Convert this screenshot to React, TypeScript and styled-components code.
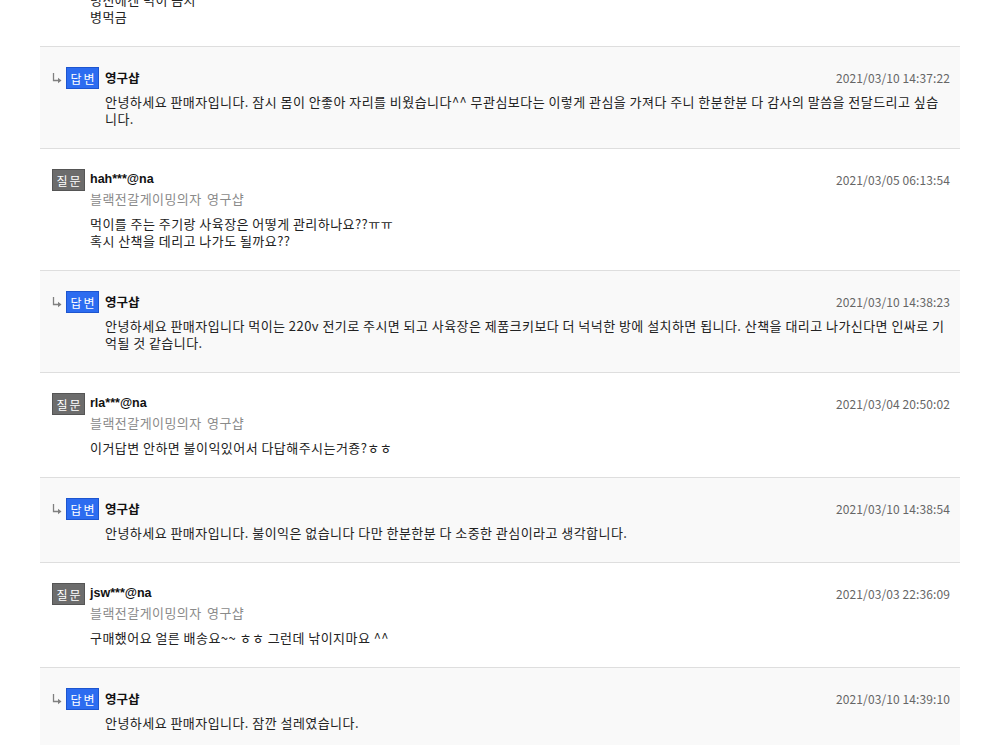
import React from "react";
import styled, { createGlobalStyle } from "styled-components";

const Global = createGlobalStyle`
  html, body { margin: 0; padding: 0; background: #fff; overflow: hidden; }
  body { font-family: "Noto Sans CJK KR", "Noto Sans", sans-serif; font-size: 13px; color: #222; }
`;

const List = styled.ul`
  list-style: none;
  margin: -75px 0 0 40px;
  padding: 0;
  width: 920px;
`;

const Row = styled.li<{ $answer?: boolean }>`
  display: flex;
  padding: 21px 10px 21px 12px;
  border-bottom: 1px solid #dedede;
  background: ${(p) => (p.$answer ? "#f9f9f9" : "#fff")};
`;

const Marker = styled.div<{ $answer?: boolean }>`
  display: flex;
  align-items: flex-start;
  flex: none;
  width: ${(p) => (p.$answer ? "53px" : "38px")};
`;

const ArrowIcon = styled.svg`
  flex: none;
  width: 10px;
  height: 11px;
  margin: 5px 4px 0 0;
  color: #808080;
`;

const Badge = styled.span<{ $answer?: boolean }>`
  display: inline-flex;
  align-items: center;
  justify-content: center;
  box-sizing: border-box;
  width: 33px;
  height: 22px;
  margin-top: -1px;
  font-size: 12px;
  letter-spacing: 2px;
  padding-left: 2px;
  color: #fff;
  background: ${(p) => (p.$answer ? "#2c6cf0" : "#6c6c6c")};
  border: 1px solid ${(p) => (p.$answer ? "#1d55cf" : "#555")};
`;

const Body = styled.div`
  flex: 1;
  min-width: 0;
`;

const Header = styled.div`
  display: flex;
  justify-content: space-between;
  align-items: center;
  height: 18px;
`;

const Name = styled.strong`
  font-family: "Liberation Sans", "Noto Sans CJK KR", sans-serif;
  font-size: 12.5px;
  font-weight: 700;
  color: #111;
`;

const Date = styled.span`
  color: #666;
  font-size: 12px;
  letter-spacing: 0.1px;
`;

const Sub = styled.div`
  margin-top: 2px;
  line-height: 18px;
  color: #8a8a8a;
  letter-spacing: 0.45px;
  word-spacing: 2px;
`;

const Content = styled.div`
  margin-top: 7px;
  line-height: 17px;
  color: #222;
  letter-spacing: 0.45px;
  word-break: break-all;
`;

type Item = {
  answer?: boolean;
  name: string;
  date: string;
  lines: string[];
};

const items: Item[] = [
  {
    name: "kim***@na",
    date: "2021/03/06 10:21:10",
    lines: ["병신에겐 먹이 금지", "병먹금"],
  },
  {
    answer: true,
    name: "영구샵",
    date: "2021/03/10 14:37:22",
    lines: [
      "안녕하세요 판매자입니다. 잠시 몸이 안좋아 자리를 비웠습니다^^ 무관심보다는 이렇게 관심을 가져다 주니 한분한분 다 감사의 말씀을 전달드리고 싶습니다.",
    ],
  },
  {
    name: "hah***@na",
    date: "2021/03/05 06:13:54",
    lines: ["먹이를 주는 주기랑 사육장은 어떻게 관리하나요??ㅠㅠ", "혹시 산책을 데리고 나가도 될까요??"],
  },
  {
    answer: true,
    name: "영구샵",
    date: "2021/03/10 14:38:23",
    lines: [
      "안녕하세요 판매자입니다 먹이는 220v 전기로 주시면 되고 사육장은 제품크키보다 더 넉넉한 방에 설치하면 됩니다. 산책을 대리고 나가신다면 인싸로 기억될 것 같습니다.",
    ],
  },
  {
    name: "rla***@na",
    date: "2021/03/04 20:50:02",
    lines: ["이거답변 안하면 불이익있어서 다답해주시는거죵?ㅎㅎ"],
  },
  {
    answer: true,
    name: "영구샵",
    date: "2021/03/10 14:38:54",
    lines: ["안녕하세요 판매자입니다. 불이익은 없습니다 다만 한분한분 다 소중한 관심이라고 생각합니다."],
  },
  {
    name: "jsw***@na",
    date: "2021/03/03 22:36:09",
    lines: ["구매했어요 얼른 배송요~~ ㅎㅎ 그런데 낚이지마요 ^^"],
  },
  {
    answer: true,
    name: "영구샵",
    date: "2021/03/10 14:39:10",
    lines: ["안녕하세요 판매자입니다. 잠깐 설레였습니다."],
  },
];

const Arrow = () => (
  <ArrowIcon viewBox="0 0 10 11" aria-hidden="true">
    <path d="M1.5 0 V7.5 H8" fill="none" stroke="currentColor" strokeWidth="1.3" />
    <path d="M6 4.8 L9.5 7.5 L6 10.2 Z" fill="currentColor" />
  </ArrowIcon>
);

export default function App() {
  return (
    <>
      <Global />
      <List>
        {items.map((it, i) => (
          <Row key={i} $answer={it.answer}>
            <Marker $answer={it.answer}>
              {it.answer && <Arrow />}
              <Badge $answer={it.answer}>{it.answer ? "답변" : "질문"}</Badge>
            </Marker>
            <Body>
              <Header>
                <Name>{it.name}</Name>
                <Date>{it.date}</Date>
              </Header>
              {!it.answer && <Sub>블랙전갈게이밍의자 영구샵</Sub>}
              <Content>
                {it.lines.map((l, j) => (
                  <div key={j}>{l}</div>
                ))}
              </Content>
            </Body>
          </Row>
        ))}
      </List>
    </>
  );
}
